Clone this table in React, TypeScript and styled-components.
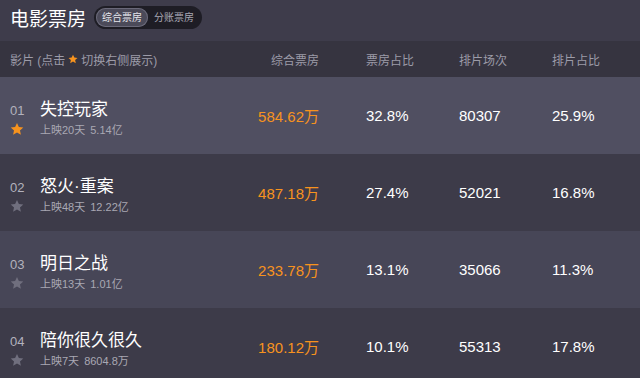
import React from "react";
import styled, { createGlobalStyle } from "styled-components";

const GlobalStyle = createGlobalStyle`
  html, body {
    margin: 0;
    padding: 0;
    background: #3d3b49;
    font-family: "Liberation Sans", "Noto Sans CJK SC", sans-serif;
  }
`;

const movies = [
  { rank: "01", name: "失控玩家", days: "上映20天", total: "5.14亿", box: "584.62万", boxRate: "32.8%", shows: "80307", showRate: "25.9%", active: true },
  { rank: "02", name: "怒火·重案", days: "上映48天", total: "12.22亿", box: "487.18万", boxRate: "27.4%", shows: "52021", showRate: "16.8%" },
  { rank: "03", name: "明日之战", days: "上映13天", total: "1.01亿", box: "233.78万", boxRate: "13.1%", shows: "35066", showRate: "11.3%" },
  { rank: "04", name: "陪你很久很久", days: "上映7天", total: "8604.8万", box: "180.12万", boxRate: "10.1%", shows: "55313", showRate: "17.8%" },
];

const Star = ({ size = 13, color = "#f7931e" }: { size?: number; color?: string }) => (
  <svg width={size} height={size} viewBox="0 0 24 24">
    <path
      fill={color}
      d="M12 1.5l3.2 7 7.6.8-5.7 5.1 1.6 7.5L12 18l-6.7 3.9 1.6-7.5L1.2 9.3l7.6-.8z"
    />
  </svg>
);

const App = () => {
  return (
    <Page>
      <GlobalStyle />
      <TopBar>
        <Title>电影票房</Title>
        <Toggle>
          <ToggleItem active>综合票房</ToggleItem>
          <ToggleItem>分账票房</ToggleItem>
        </Toggle>
      </TopBar>
      <HeadRow>
        <HeadName>
          影片 (点击 <Star size={10} /> 切换右侧展示)
        </HeadName>
        <HeadCell right>综合票房</HeadCell>
        <HeadCell>票房占比</HeadCell>
        <HeadCell>排片场次</HeadCell>
        <HeadCell>排片占比</HeadCell>
      </HeadRow>
      {movies.map((m, i) => (
        <Row key={m.rank} tone={m.active ? "active" : i % 2 ? "dark" : "mid"}>
          <NameCell>
            <RankCol>
              <Rank>{m.rank}</Rank>
              <Star size={14} color={m.active ? "#f7931e" : "#706f7e"} />
            </RankCol>
            <Info>
              <Name>{m.name}</Name>
              <Sub>
                {m.days}
                <span>{m.total}</span>
              </Sub>
            </Info>
          </NameCell>
          <Box>{m.box}</Box>
          <Val>{m.boxRate}</Val>
          <Val>{m.shows}</Val>
          <Val>{m.showRate}</Val>
        </Row>
      ))}
    </Page>
  );
};

export default App;

const Page = styled.div`
  width: 640px;
  height: 378px;
  overflow: hidden;
  background: #3d3b49;
`;

const TopBar = styled.div`
  height: 41px;
  display: flex;
  align-items: center;
  padding: 0 10px;
  gap: 8px;
  background: #3e3c4b;
  box-sizing: border-box;
`;

const Title = styled.div`
  font-size: 19px;
  color: #fff;
  margin-top: -7px;
`;

const Toggle = styled.div`
  display: flex;
  align-items: center;
  height: 23px;
  padding: 0 2px;
  border-radius: 12px;
  background: #1e1d25;
  margin-top: -7px;
  box-sizing: border-box;
`;

const ToggleItem = styled.div<{ active?: boolean }>`
  height: 19px;
  line-height: 19px;
  padding: 0 6px;
  border-radius: 10px;
  font-size: 10px;
  white-space: nowrap;
  color: ${(p) => (p.active ? "#e6e6ec" : "#a9a8b4")};
  background: ${(p) => (p.active ? "#4b4a59" : "transparent")};
  box-shadow: ${(p) => (p.active ? "inset 0 0 0 1px #6a6979" : "none")};
`;

const grid = `
  display: grid;
  grid-template-columns: 1fr 93px 93px 93px 93px;
  padding: 0 42px 0 10px;
  align-items: center;
  white-space: nowrap;
`;

const HeadRow = styled.div`
  ${grid}
  height: 36px;
  background: #363440;
  font-size: 12px;
  color: #9c9ba8;
`;

const HeadName = styled.div`
  display: flex;
  align-items: center;
  gap: 3px;
`;

const HeadCell = styled.div<{ right?: boolean }>`
  text-align: ${(p) => (p.right ? "right" : "left")};
  padding-left: ${(p) => (p.right ? "0" : "47px")};
`;

const Row = styled.div<{ tone: "active" | "mid" | "dark" }>`
  ${grid}
  height: 77px;
  background: ${(p) =>
    p.tone === "active" ? "#504f61" : p.tone === "mid" ? "#474657" : "#3d3b49"};
`;

const NameCell = styled.div`
  display: flex;
  align-items: center;
  padding-top: 6px;
`;

const RankCol = styled.div`
  width: 30px;
  display: flex;
  flex-direction: column;
  gap: 5px;
  margin-top: 3px;
`;

const Rank = styled.div`
  font-size: 13px;
  line-height: 13px;
  color: #b3b2bd;
`;

const Info = styled.div`
  display: flex;
  flex-direction: column;
  gap: 3px;
`;

const Name = styled.div`
  font-size: 17px;
  line-height: 20px;
  color: #fff;
`;

const Sub = styled.div`
  font-size: 11px;
  line-height: 14px;
  color: #a9a8b3;
  span {
    margin-left: 5px;
  }
`;

const Box = styled.div`
  text-align: right;
  font-size: 15px;
  color: #f7931e;
`;

const Val = styled.div`
  padding-left: 47px;
  font-size: 15px;
  color: #fff;
`;
